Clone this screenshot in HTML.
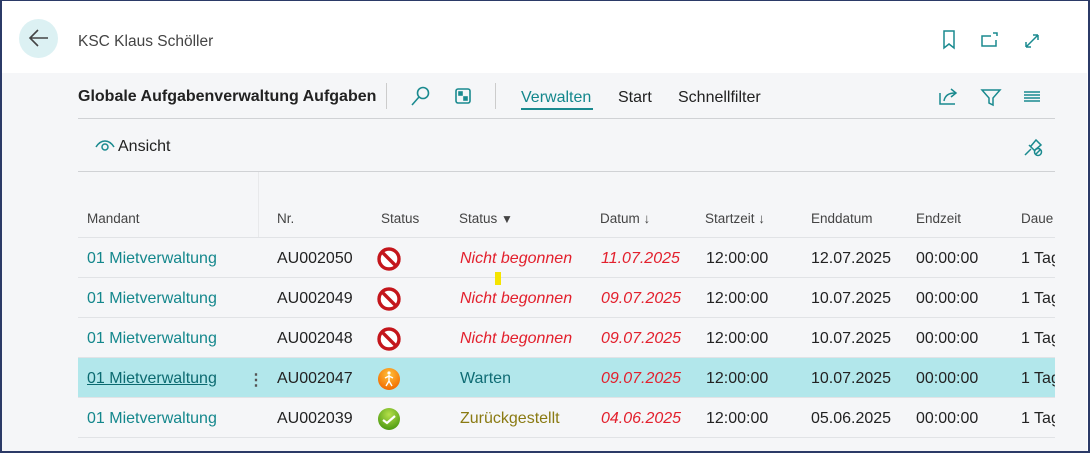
<!DOCTYPE html>
<html><head><meta charset="utf-8"><style>
*{margin:0;padding:0;box-sizing:border-box}
body{width:1090px;height:453px;overflow:hidden;background:#fff;font-family:"Liberation Sans",sans-serif;position:relative}
.frame{position:absolute;left:0;top:0;width:1090px;height:453px;border:2px solid #2b3a67;border-top-width:1px;border-bottom-width:2px}
.hdr{position:absolute;left:2px;top:1px;width:1085px;height:72px;background:#fff}
.gray{position:absolute;left:2px;top:73px;width:1085px;height:378px;background:#f5f6f8}
.abs{position:absolute;white-space:nowrap}
.t{font-size:15px;color:#212121}
.abs.teal,.c.teal{color:#13878c}
.line{position:absolute;height:1px;background:#d6d8db}
.row{position:absolute;left:78px;width:977px;height:40px;border-bottom:1px solid #e1e3e6}
.c{position:absolute;top:12px;font-size:16px;white-space:nowrap;color:#222}
.c.red{color:#e3202d;font-style:italic}
.hd{position:absolute;top:211px;font-size:13.5px;color:#444;white-space:nowrap}
.ico{position:absolute;top:9px;left:299px;width:24px;height:24px;border-radius:50%}
</style></head><body>
<div class="hdr"></div>
<div class="gray"></div>
<div class="abs" style="left:19px;top:19px;width:39px;height:39px;border-radius:50%;background:#dcf1f3"></div>
<svg class="abs" style="left:28px;top:28px" width="22" height="20" viewBox="0 0 22 20"><path d="M20 10H3M10 2L2 10l8 8" fill="none" stroke="#444" stroke-width="1.6"/></svg>
<div class="abs t" style="left:78px;top:33px;font-size:15.5px;color:#444">KSC Klaus Schöller</div>
<svg class="abs" style="left:940px;top:29px" width="100" height="22" viewBox="0 0 100 22" fill="none" stroke="#1a8a8f" stroke-width="1.5"><path d="M4 2h10v17l-5-4-5 4z"/><path d="M51 7h-9v10h14v-6M53 4h4v3"/><path d="M86 18l12-12M86 18v-5M86 18h5M98 6v5M98 6h-5"/></svg>
<div class="abs" style="left:78px;top:88px;font-size:16px;font-weight:bold;color:#222">Globale Aufgabenverwaltung Aufgaben</div>
<div class="abs" style="left:386px;top:83px;width:1px;height:26px;background:#ccc"></div>
<div class="abs" style="left:495px;top:83px;width:1px;height:26px;background:#ccc"></div>
<svg class="abs" style="left:409px;top:86px" width="70" height="22" viewBox="0 0 70 22" fill="none" stroke="#1a8a8f" stroke-width="1.6"><circle cx="14" cy="7" r="5.5"/><path d="M10 11L3 19"/><rect x="47" y="3" width="14" height="14" rx="2"/><rect x="50" y="6" width="3" height="3" fill="#1a8a8f"/><rect x="55" y="11" width="3" height="3" fill="#1a8a8f"/></svg>
<div class="abs t teal" style="left:521px;top:89px;font-size:16px">Verwalten</div>
<div class="abs" style="left:521px;top:108px;width:72px;height:2px;background:#1a8a8f"></div>
<div class="abs t" style="left:618px;top:89px;font-size:16px">Start</div>
<div class="abs t" style="left:678px;top:89px;font-size:16px">Schnellfilter</div>
<svg class="abs" style="left:937px;top:86px" width="110" height="22" viewBox="0 0 110 22" fill="none" stroke="#1a8a8f" stroke-width="1.5"><path d="M3 7v11h15M7 15c1-6 5-8 11-8M14 3l5 4-5 4"/><path d="M45 4h18l-7 8v7l-4-2v-5z"/><path d="M87 6h16M87 9h16M87 12h16M87 15h16"/></svg>
<div class="line" style="left:78px;top:118px;width:977px;background:#d0d2d5"></div>
<svg class="abs" style="left:94px;top:138px" width="22" height="14" viewBox="0 0 22 14" fill="none" stroke="#1a8a8f" stroke-width="1.5"><path d="M2 9c5-8 13-8 18 0"/><circle cx="11" cy="9" r="3"/></svg>
<div class="abs t" style="left:118px;top:138px;font-size:16px">Ansicht</div>
<svg class="abs" style="left:1022px;top:136px" width="22" height="22" viewBox="0 0 22 22" fill="none" stroke="#1a8a8f" stroke-width="1.5"><path d="M3 19l6-6M7 9l6 6M9 10l5-6 5 5-6 5"/><circle cx="16" cy="16" r="3.5"/><path d="M13.5 18.5l5-5"/></svg>
<div class="line" style="left:78px;top:171px;width:977px;background:#d0d2d5"></div>
<div class="abs" style="left:258px;top:172px;width:1px;height:66px;background:#e8e9eb"></div>
<div class="hd" style="left:87px">Mandant</div>
<div class="hd" style="left:277px">Nr.</div>
<div class="hd" style="left:381px">Status</div>
<div class="hd" style="left:459px">Status <span style="font-size:12px">▼</span></div>
<div class="hd" style="left:600px">Datum ↓</div>
<div class="hd" style="left:705px">Startzeit ↓</div>
<div class="hd" style="left:811px">Enddatum</div>
<div class="hd" style="left:916px">Endzeit</div>
<div class="hd" style="left:1021px">Daue</div>
<div class="line" style="left:78px;top:237px;width:977px;background:#e1e3e6"></div>

<div class="row" style="top:238px"><div class="c teal" style="left:9px">01 Mietverwaltung</div><div class="c" style="left:199px">AU002050</div>
<svg class="ico" viewBox="0 0 24 24"><circle cx="12" cy="12" r="10" fill="#fff" stroke="#c4161c" stroke-width="3.4"/><path d="M5 5l14 14" stroke="#c4161c" stroke-width="3.4"/></svg>
<div class="c red" style="left:382px">Nicht begonnen</div><div class="c red" style="left:523px">11.07.2025</div><div class="c" style="left:628px">12:00:00</div><div class="c" style="left:733px">12.07.2025</div><div class="c" style="left:838px">00:00:00</div><div class="c" style="left:943px">1 Tag</div></div>
<div class="abs" style="left:495px;top:272px;width:6px;height:13px;background:#f5e400"></div>
<div class="row" style="top:278px"><div class="c teal" style="left:9px">01 Mietverwaltung</div><div class="c" style="left:199px">AU002049</div>
<svg class="ico" viewBox="0 0 24 24"><circle cx="12" cy="12" r="10" fill="#fff" stroke="#c4161c" stroke-width="3.4"/><path d="M5 5l14 14" stroke="#c4161c" stroke-width="3.4"/></svg>
<div class="c red" style="left:382px">Nicht begonnen</div><div class="c red" style="left:523px">09.07.2025</div><div class="c" style="left:628px">12:00:00</div><div class="c" style="left:733px">10.07.2025</div><div class="c" style="left:838px">00:00:00</div><div class="c" style="left:943px">1 Tag</div></div>
<div class="row" style="top:318px"><div class="c teal" style="left:9px">01 Mietverwaltung</div><div class="c" style="left:199px">AU002048</div>
<svg class="ico" viewBox="0 0 24 24"><circle cx="12" cy="12" r="10" fill="#fff" stroke="#c4161c" stroke-width="3.4"/><path d="M5 5l14 14" stroke="#c4161c" stroke-width="3.4"/></svg>
<div class="c red" style="left:382px">Nicht begonnen</div><div class="c red" style="left:523px">09.07.2025</div><div class="c" style="left:628px">12:00:00</div><div class="c" style="left:733px">10.07.2025</div><div class="c" style="left:838px">00:00:00</div><div class="c" style="left:943px">1 Tag</div></div>
<div class="row" style="top:358px;background:#b2e7eb"><div class="c teal" style="left:9px;text-decoration:underline;color:#0b6a70">01 Mietverwaltung</div><div class="c" style="left:170px;font-weight:bold;color:#555">⋮</div><div class="c" style="left:199px">AU002047</div>
<svg class="ico" viewBox="0 0 24 24"><defs><radialGradient id="o" cx=".5" cy=".3" r=".7"><stop offset="0" stop-color="#ffc23a"/><stop offset="1" stop-color="#f26a00"/></radialGradient></defs><circle cx="12" cy="12" r="11" fill="url(#o)"/><circle cx="12" cy="6" r="1.6" fill="#fff"/><path d="M12 8v6l-3 5M12 14l3 5M8 11l4-2 4 2" stroke="#fff" stroke-width="1.4" fill="none"/></svg>
<div class="c" style="left:382px;color:#0f6c74">Warten</div><div class="c red" style="left:523px">09.07.2025</div><div class="c" style="left:628px">12:00:00</div><div class="c" style="left:733px">10.07.2025</div><div class="c" style="left:838px">00:00:00</div><div class="c" style="left:943px">1 Tag</div></div>
<div class="row" style="top:398px"><div class="c teal" style="left:9px">01 Mietverwaltung</div><div class="c" style="left:199px">AU002039</div>
<svg class="ico" viewBox="0 0 24 24"><defs><radialGradient id="g" cx=".5" cy=".3" r=".7"><stop offset="0" stop-color="#b6e04a"/><stop offset="1" stop-color="#4c9a12"/></radialGradient></defs><circle cx="12" cy="12" r="11" fill="url(#g)"/><path d="M6 13l4 3 8-7" stroke="#fff" stroke-width="2.2" fill="none"/></svg>
<div class="c" style="left:382px;color:#8a7a12">Zurückgestellt</div><div class="c red" style="left:523px">04.06.2025</div><div class="c" style="left:628px">12:00:00</div><div class="c" style="left:733px">05.06.2025</div><div class="c" style="left:838px">00:00:00</div><div class="c" style="left:943px">1 Tag</div></div>
<div class="abs" style="left:1055px;top:237px;width:32px;height:214px;background:#f5f6f8"></div>
<div class="frame"></div>
</body></html>
